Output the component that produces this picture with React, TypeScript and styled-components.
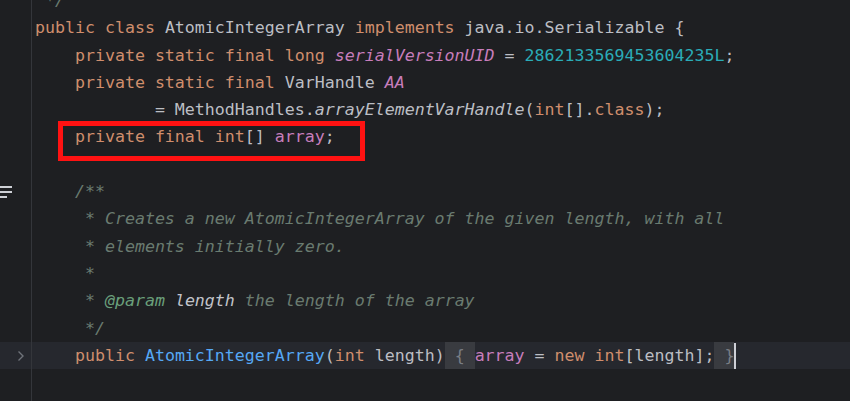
import React from "react";
import styled, { createGlobalStyle, css } from "styled-components";

const GlobalStyle = createGlobalStyle`
    html, body {
        margin: 0;
        padding: 0;
        height: 100%;
        overflow: hidden;
        background: #1e1f22;
    }
    #root {
        height: 100%;
    }
`;

type Kind =
    | "plain"
    | "kw"
    | "field"
    | "staticField"
    | "num"
    | "doc"
    | "docTag"
    | "docValue"
    | "method"
    | "staticCall"
    | "fold";

type Token = [string, Kind];

const colors: Record<Kind, string> = {
    plain: "#bcbec4",
    kw: "#cf8e6d",
    field: "#c77dbb",
    staticField: "#c77dbb",
    num: "#2aacb8",
    doc: "#6a7b70",
    docTag: "#6a9f7b",
    docValue: "#c2c4ca",
    method: "#56a8f5",
    staticCall: "#bcbec4",
    fold: "#7a7e85",
};

const italicKinds: Kind[] = ["staticField", "doc", "docTag", "docValue", "staticCall"];

const Editor = styled.div`
    display: flex;
    flex-direction: column;
    height: calc(100% + 13px);
    margin-top: -13px;
    font-family: "DejaVu Sans Mono", "Liberation Mono", monospace;
    font-size: 16.6px;
    line-height: 27.3px;
    color: #bcbec4;
`;

const Row = styled.div<{ $current?: boolean; $fill?: boolean }>`
    display: flex;
    position: relative;
    height: 27.3px;
    background: ${p => (p.$current ? "#26282e" : "transparent")};
    ${p =>
        p.$fill &&
        css`
            flex: 1;
        `}
`;

const Gutter = styled.div`
    width: 32px;
    flex-shrink: 0;
    border-right: 1px solid #34363b;
    display: flex;
    align-items: center;
    justify-content: flex-end;
    padding-right: 6px;
    box-sizing: border-box;
`;

const Code = styled.div`
    padding-left: 3px;
    white-space: pre;
    flex: 1;
    display: flex;
    align-items: center;
`;

const Tok = styled.span<{ $kind: Kind }>`
    color: ${p => colors[p.$kind]};
    font-style: ${p => (italicKinds.includes(p.$kind) ? "italic" : "normal")};
    ${p =>
        p.$kind === "fold" &&
        css`
            background: #393b40;
            align-self: stretch;
            display: inline-flex;
            align-items: center;
        `}
`;

const Caret = styled.span`
    display: inline-block;
    width: 2px;
    height: 26px;
    background: #ced0d6;
`;

const Callout = styled.span`
    position: absolute;
    left: 58px;
    top: -2px;
    width: 307px;
    height: 40px;
    box-sizing: border-box;
    border: 5px solid #ff1212;
    pointer-events: none;
`;

const DocIcon = styled.div`
    position: absolute;
    left: 0;
    top: 8px;
    display: flex;
    flex-direction: column;
    gap: 3px;

    span {
        display: block;
        height: 2px;
        background: #ced0d6;
    }
`;

const lines: Token[][] = [
    [[" */", "doc"]],
    [
        ["public class ", "kw"],
        ["AtomicIntegerArray ", "plain"],
        ["implements ", "kw"],
        ["java.io.Serializable {", "plain"],
    ],
    [
        ["    private static final long ", "kw"],
        ["serialVersionUID", "staticField"],
        [" = ", "plain"],
        ["2862133569453604235L", "num"],
        [";", "plain"],
    ],
    [
        ["    private static final ", "kw"],
        ["VarHandle ", "plain"],
        ["AA", "staticField"],
    ],
    [
        ["            = MethodHandles.", "plain"],
        ["arrayElementVarHandle", "staticCall"],
        ["(", "plain"],
        ["int", "kw"],
        ["[].", "plain"],
        ["class", "kw"],
        [");", "plain"],
    ],
    [
        ["    private final int", "kw"],
        ["[] ", "plain"],
        ["array", "field"],
        [";", "plain"],
    ],
    [],
    [["    /**", "doc"]],
    [["     * Creates a new AtomicIntegerArray of the given length, with all", "doc"]],
    [["     * elements initially zero.", "doc"]],
    [["     *", "doc"]],
    [
        ["     * ", "doc"],
        ["@param", "docTag"],
        [" ", "doc"],
        ["length", "docValue"],
        [" the length of the array", "doc"],
    ],
    [["     */", "doc"]],
    [
        ["    public ", "kw"],
        ["AtomicIntegerArray", "method"],
        ["(", "plain"],
        ["int ", "kw"],
        ["length)", "plain"],
        [" { ", "fold"],
        ["array", "field"],
        [" = ", "plain"],
        ["new int", "kw"],
        ["[length];", "plain"],
        [" }", "fold"],
    ],
];

const FIELD_LINE = 5;
const DOC_LINE = 7;
const CURRENT_LINE = 13;

const FoldArrow = () => (
    <svg width="8" height="12" viewBox="0 0 8 12">
        <path d="M1.5 1.5 L6 6 L1.5 10.5" fill="none" stroke="#6f737a" strokeWidth="1.4" />
    </svg>
);

const App = () => {
    return (
        <>
            <GlobalStyle />
            <Editor>
                {lines.map((tokens, i) => (
                    <Row key={i} $current={i === CURRENT_LINE}>
                        <Gutter>
                            {i === DOC_LINE && (
                                <DocIcon>
                                    <span style={{ width: 12 }} />
                                    <span style={{ width: 12 }} />
                                    <span style={{ width: 7 }} />
                                </DocIcon>
                            )}
                            {i === CURRENT_LINE && <FoldArrow />}
                        </Gutter>
                        <Code>
                            {tokens.map(([text, kind], j) => (
                                <Tok key={j} $kind={kind}>
                                    {text}
                                </Tok>
                            ))}
                            {i === CURRENT_LINE && <Caret />}
                        </Code>
                        {i === FIELD_LINE && <Callout />}
                    </Row>
                ))}
                <Row $fill>
                    <Gutter />
                    <Code />
                </Row>
            </Editor>
        </>
    );
};

export default App;
